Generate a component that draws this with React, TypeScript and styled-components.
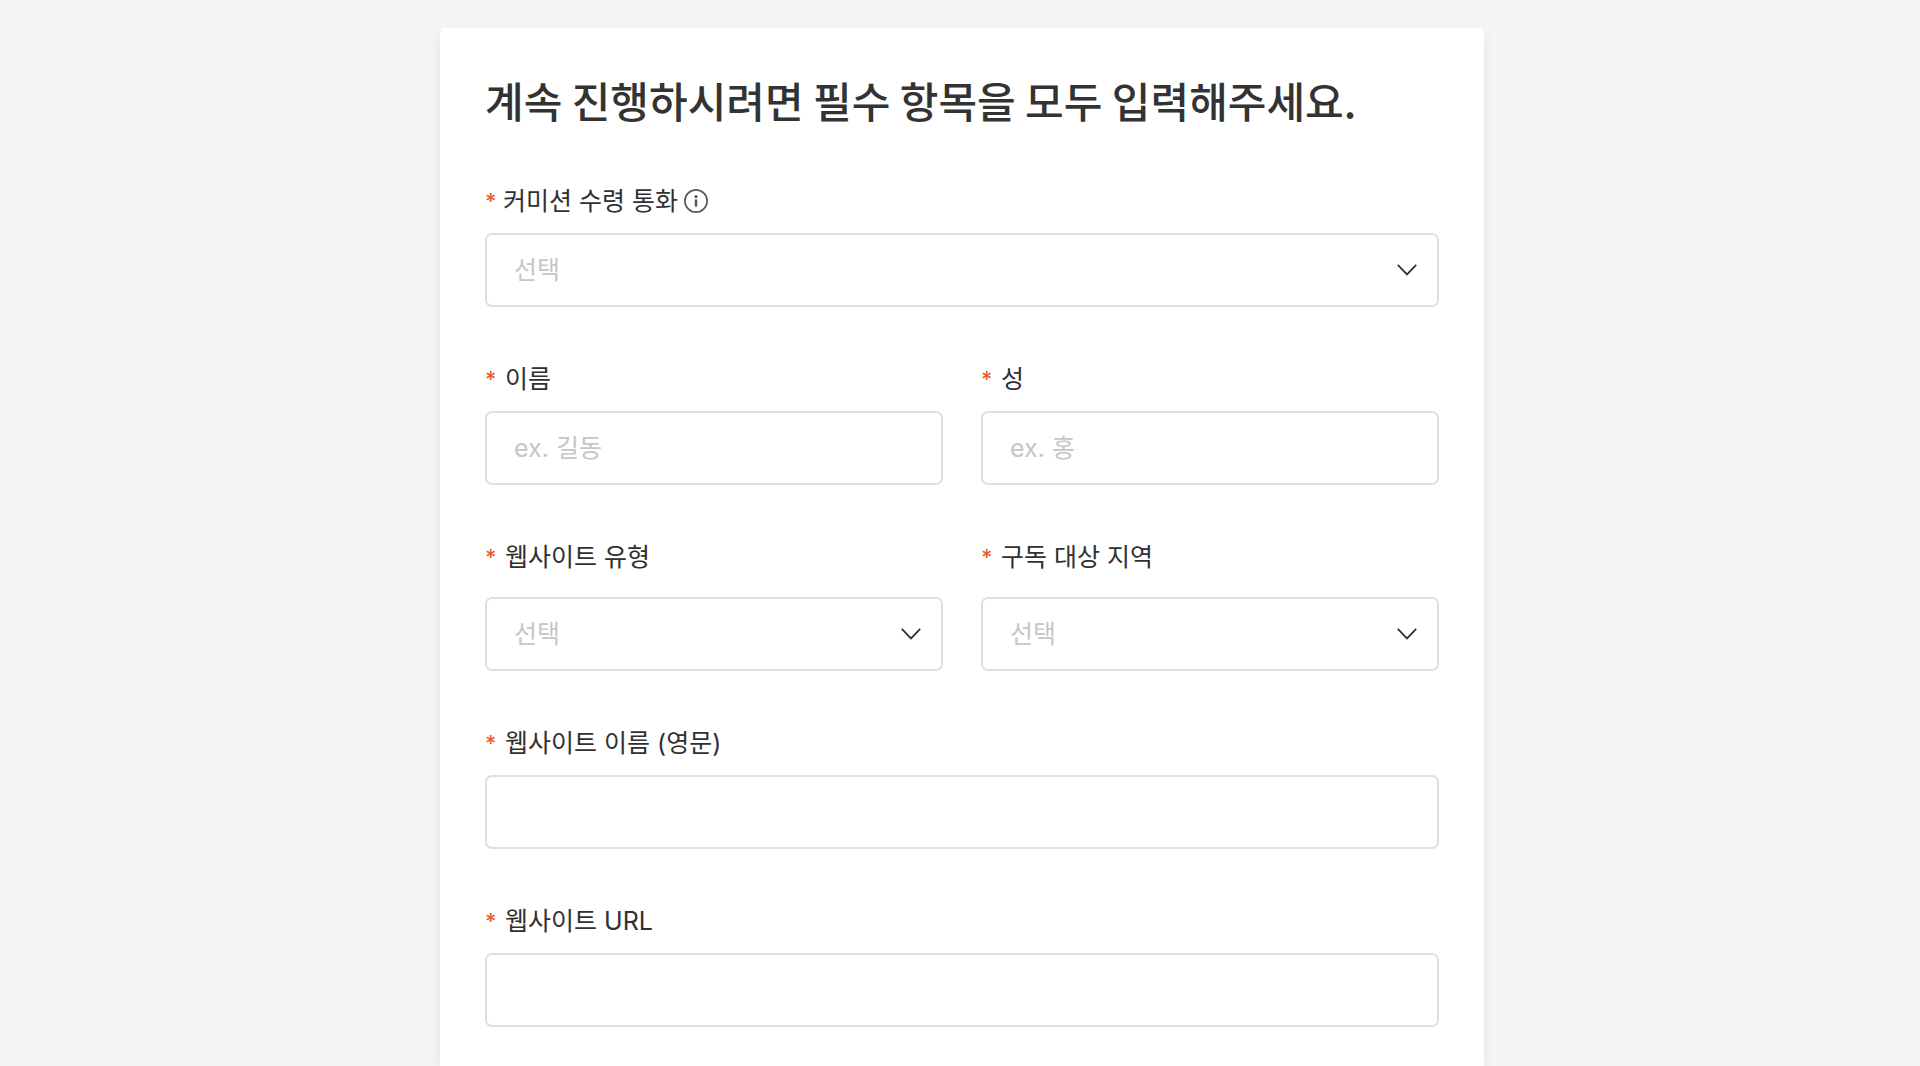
import React, { useId, useState } from "react";
import styled, { createGlobalStyle } from "styled-components";

const GlobalStyle = createGlobalStyle`
  *, *::before, *::after { box-sizing: border-box; }
  body {
    margin: 0;
    background: #f5f5f5;
    color: #303032;
    font-family: Inter, "Noto Sans CJK KR", sans-serif;
    font-size: 25px;
  }
`;

const Page = styled.main`
  display: flex;
  justify-content: center;
  min-height: 100vh;
  padding: 28px 16px 0 20px;
`;

const Card = styled.form`
  flex: 0 1 1044px;
  min-width: 0;
  padding: 44px 45px 39px;
  background: #fff;
  border-radius: 5px 5px 0 0;
  box-shadow: 0 4px 12px rgba(0, 0, 0, 0.08);
`;

const Title = styled.h1`
  margin: 0 0 55px;
  color: #333;
  font-family: "Noto Sans CJK KR", sans-serif;
  font-size: 42px;
  line-height: 56px;
  font-weight: 500;
`;

const Fields = styled.div`
  display: flex;
  flex-direction: column;
  gap: 54px;
`;

const Row = styled.div`
  display: grid;
  grid-template-columns: repeat(auto-fit, minmax(340px, 1fr));
  gap: 38px;
`;

const FieldBox = styled.div<{ $space: number }>`
  display: flex;
  flex-direction: column;
  gap: ${(p) => p.$space}px;
  min-width: 0;
`;

const LabelLine = styled.div`
  display: flex;
  align-items: center;
  gap: 6px;
  line-height: 36px;
`;

const Label = styled.label<{ $tight?: boolean }>`
  display: flex;
  gap: ${(p) => (p.$tight ? 8 : 10)}px;
`;

const Star = styled.span`
  width: 10px;
  color: #ee5a2f;
  font-size: 22px;
  font-weight: 500;
`;

const InfoButton = styled.button`
  display: flex;
  padding: 0;
  border: 0;
  background: none;
  color: #58585a;
  cursor: pointer;
`;

const TextInput = styled.input`
  width: 100%;
  height: 74px;
  padding: 0 27px;
  border: 2px solid #dfe0e3;
  border-radius: 7px;
  background: #fff;
  color: inherit;
  font: inherit;
  &::placeholder { color: #c5c6c9; opacity: 1; }
`;

const SelectWrap = styled.div`
  display: grid;
  align-items: center;
  & > * { grid-area: 1 / 1; }
  & > svg { justify-self: end; margin-right: 22px; pointer-events: none; }
`;

const SelectInput = styled.select<{ $empty: boolean }>`
  appearance: none;
  width: 100%;
  height: 74px;
  padding: 0 56px 0 27px;
  border: 2px solid #dfe0e3;
  border-radius: 7px;
  background: #fff;
  color: ${(p) => (p.$empty ? "#c5c6c9" : "inherit")};
  font: inherit;
`;

const Chevron = () => (
  <svg width="20" height="12" viewBox="0 0 20 12" fill="none" stroke="#2f2f31" strokeWidth="1.7" aria-hidden="true">
    <path d="M0.8 0.8 10 10.4 19.2 0.8" />
  </svg>
);

const InfoIcon = () => (
  <svg width="24" height="24" viewBox="0 0 24 24" fill="none" aria-hidden="true">
    <circle cx="12" cy="12" r="11.1" stroke="currentColor" strokeWidth="1.7" />
    <circle cx="12" cy="7.6" r="1.6" fill="currentColor" />
    <path d="M12 10.4V17.6" stroke="currentColor" strokeWidth="2.5" />
  </svg>
);

type FieldProps = {
  label: string;
  placeholder?: string;
  options?: string[];
  info?: string;
  space?: number;
};

function Field({ label, placeholder, options, info, space = 14 }: FieldProps) {
  const id = useId();
  const [value, setValue] = useState("");
  return (
    <FieldBox $space={space}>
      <LabelLine>
        <Label htmlFor={id} $tight={Boolean(info)}>
          <Star>*</Star>
          {label}
        </Label>
        {info && (
          <InfoButton type="button" aria-label={info}>
            <InfoIcon />
          </InfoButton>
        )}
      </LabelLine>
      {options ? (
        <SelectWrap>
          <SelectInput id={id} required value={value} $empty={!value} onChange={(e) => setValue(e.target.value)}>
            <option value="" disabled>선택</option>
            {options.map((o) => (
              <option key={o}>{o}</option>
            ))}
          </SelectInput>
          <Chevron />
        </SelectWrap>
      ) : (
        <TextInput id={id} required placeholder={placeholder} value={value} onChange={(e) => setValue(e.target.value)} />
      )}
    </FieldBox>
  );
}

export default function App() {
  return (
    <>
      <GlobalStyle />
      <Page>
        <Card>
          <Title>계속 진행하시려면 필수 항목을 모두 입력해주세요.</Title>
          <Fields>
            <Field label="커미션 수령 통화" info="커미션 수령 통화 안내" options={[]} />
            <Row>
              <Field label="이름" placeholder="ex. 길동" />
              <Field label="성" placeholder="ex. 홍" />
            </Row>
            <Row>
              <Field label="웹사이트 유형" space={22} options={[]} />
              <Field label="구독 대상 지역" space={22} options={[]} />
            </Row>
            <Field label="웹사이트 이름 (영문)" />
            <Field label="웹사이트 URL" />
          </Fields>
        </Card>
      </Page>
    </>
  );
}
